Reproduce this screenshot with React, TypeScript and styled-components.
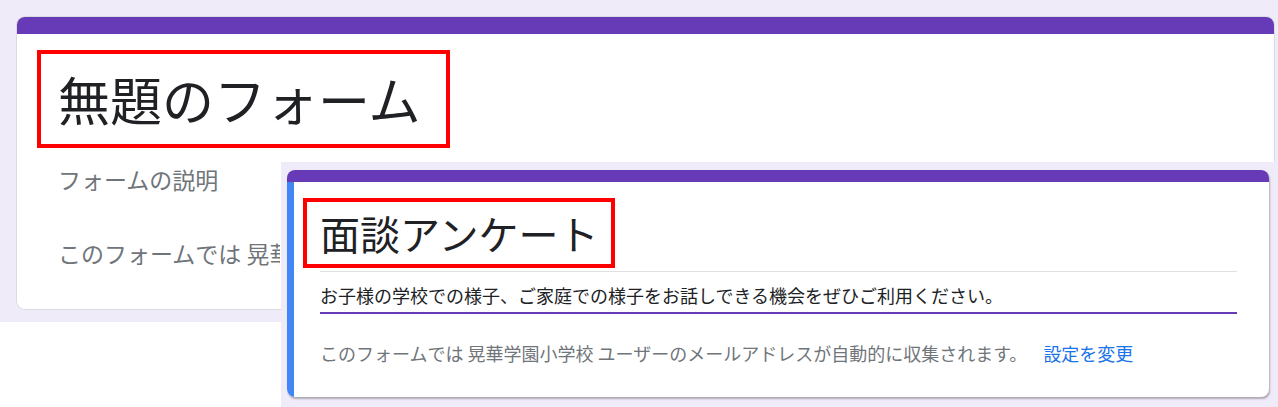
import React from "react";
import styled, { createGlobalStyle } from "styled-components";

const GlobalStyle = createGlobalStyle`
  body {
    margin: 0;
    background: #fff;
    font-family: "Noto Sans CJK JP", "Noto Sans", sans-serif;
  }
`;

const Page = styled.div`
  position: relative;
  width: 1278px;
  height: 407px;
  overflow: hidden;
`;

// each screenshot sits on the lavender forms background
const Shot = styled.div`
  background: #f0ebf8;
  box-sizing: border-box;
`;

const BackShot = styled(Shot)`
  width: 1278px;
  height: 322px;
  padding: 17px 4px 0 17px;
`;

// second screenshot pasted on top of the first one
const FrontShot = styled(Shot)`
  position: absolute;
  left: 281px;
  top: 162px;
  width: 997px;
  height: 245px;
  padding: 8px 9px 0 6px;
`;

const Card = styled.div<{ $shadow?: boolean }>`
  display: flex;
  flex-direction: column;
  background: #fff;
  border-radius: 8px;
  overflow: hidden;
  box-shadow: ${(p) =>
    p.$shadow
      ? "1px 2px 2px rgba(0, 0, 0, 0.28)"
      : "0 0 0 1px #dadce0"};
`;

const TopBar = styled.div<{ $h: number }>`
  height: ${(p) => p.$h}px;
  background: #673ab7;
  flex-shrink: 0;
`;

const Body = styled.div<{ $accent?: boolean }>`
  display: flex;
  flex-direction: column;
  align-items: flex-start;
  border-left: ${(p) => (p.$accent ? "7px solid #4285f4" : "none")};
`;

const BackBody = styled(Body)`
  height: 275px;
  padding: 16px 0 0 41px;
  box-sizing: border-box;
`;

const FrontBody = styled(Body)`
  padding: 16px 32px 32px 26px;
`;

// red annotation frame round the title
const RedFrame = styled.div<{ $h: number; $pl: number; $pr: number; $ml: number }>`
  border: 4px solid #ff0000;
  height: ${(p) => p.$h}px;
  width: fit-content;
  padding: 0 ${(p) => p.$pr}px 0 ${(p) => p.$pl}px;
  margin-left: ${(p) => p.$ml}px;
  display: flex;
  align-items: center;
`;

const Title = styled.div<{ $size: number }>`
  font-size: ${(p) => p.$size}px;
  line-height: 1;
  color: #202124;
  white-space: nowrap;
`;

const TitleField = styled.div`
  align-self: stretch;
  padding-bottom: 3px;
  border-bottom: 1px solid #e0e0e0;
`;

// the back text is cut off where the front screenshot starts
const GrayText = styled.div<{ $size: number; $mt: number; $clip?: number }>`
  font-size: ${(p) => p.$size}px;
  line-height: 32px;
  margin-top: ${(p) => p.$mt}px;
  color: #70757a;
  white-space: nowrap;
  overflow: hidden;
  max-width: ${(p) => (p.$clip ? `${p.$clip}px` : "none")};
`;

const DescField = styled.div`
  align-self: stretch;
  padding: 11px 0 5px;
  font-size: 18px;
  line-height: 24px;
  color: #202124;
  border-bottom: 2px solid #673ab7;
  white-space: nowrap;
`;

const EmailRow = styled.div`
  margin-top: 27px;
  font-size: 18px;
  line-height: 24px;
  color: #70757a;
  white-space: nowrap;
`;

const Link = styled.span`
  color: #1a73e8;
  margin-left: 16px;
`;

const emailText = "このフォームでは 晃華学園小学校 ユーザーのメールアドレスが自動的に収集されます。";

export default function App() {
  return (
    <>
      <GlobalStyle />
      <Page>
        <BackShot>
          <Card>
            <TopBar $h={17} />
            <BackBody>
              <RedFrame $h={90} $pl={17} $pr={26} $ml={-21}>
                <Title $size={52}>無題のフォーム</Title>
              </RedFrame>
              <GrayText $size={23} $mt={15}>
                フォームの説明
              </GrayText>
              <GrayText $size={23} $mt={42} $clip={222}>
                {emailText}
              </GrayText>
            </BackBody>
          </Card>
        </BackShot>

        <FrontShot>
          <Card $shadow>
            <TopBar $h={12} />
            <FrontBody $accent>
              <TitleField>
                <RedFrame $h={62} $pl={13} $pr={13} $ml={-17}>
                  <Title $size={40}>面談アンケート</Title>
                </RedFrame>
              </TitleField>
              <DescField>
                お子様の学校での様子、ご家庭での様子をお話しできる機会をぜひご利用ください。
              </DescField>
              <EmailRow>
                {emailText}
                <Link>設定を変更</Link>
              </EmailRow>
            </FrontBody>
          </Card>
        </FrontShot>
      </Page>
    </>
  );
}
